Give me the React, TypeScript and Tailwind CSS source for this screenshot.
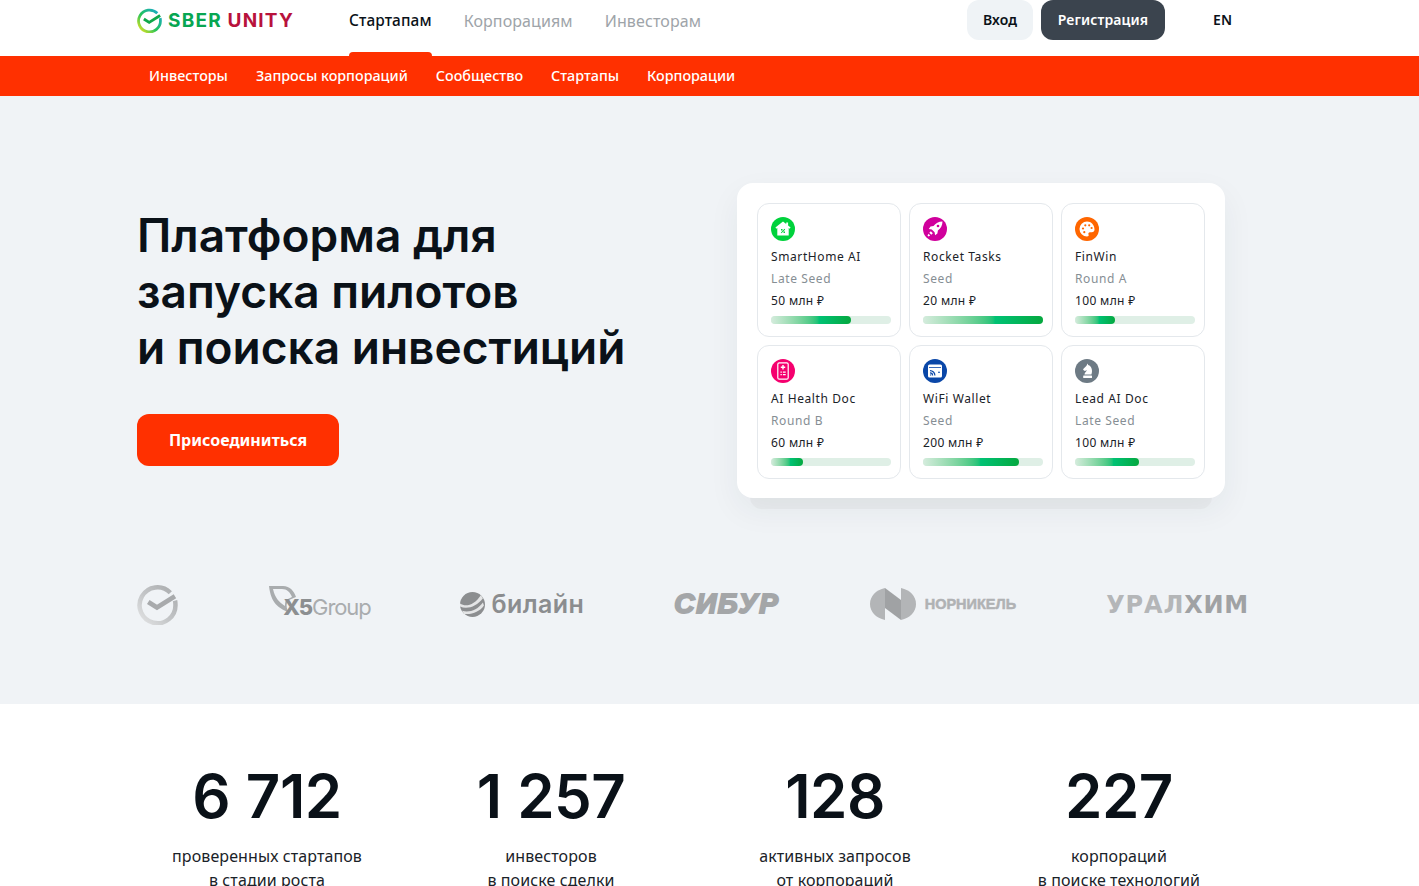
import { ReactNode } from "react";

const sans = "font-['Noto_Sans','Open_Sans',sans-serif]";

interface Startup {
  name: string;
  round: string;
  amount: string;
  progress: number;
  color: string;
  icon: ReactNode;
}

const HomeIcon = (
  <svg viewBox="0 0 24 24" className="h-6 w-6">
    <path d="M12 4.500l3.200 2.500V5.600h1.900v3l2.500 2-1 1.200-.9-.7V18.500H6.300v-7.400l-.9.7-1-1.200z" fill="#fff" />
    <path d="M10 12h1.500v1.500H10zm2.500 2.500H14V16h-1.500zM13.500 11.800l.7.6-3.700 3.900-.7-.6z" fill="#00d23c" />
  </svg>
);

const RocketIcon = (
  <svg viewBox="0 0 24 24" className="h-6 w-6">
    <path d="M19.500 4.500c-4 .1-6.800 1.700-9 4.600l-3 .5-1.700 2.300 3 .5 2.800 2.800.5 3 2.300-1.700.5-3c2.900-2.200 4.500-5 4.600-9z" fill="#fff" />
    <circle cx="15" cy="9" r="1.300" fill="#d0009c" />
    <path d="M7.800 14.200l2 2-1.500 1.500-2-2zM5.500 16.800l1.700 1.700-1.700 1-1-1z" fill="#fff" />
  </svg>
);

const PaletteIcon = (
  <svg viewBox="0 0 24 24" className="h-6 w-6">
    <path d="M12 4.500a7.500 7.500 0 0 0 0 15c1.400 0 2-1 1.500-2-.5-1.100.2-2.300 1.500-2.300h1.800c1.600 0 2.700-1.100 2.700-2.800 0-4.400-3.300-7.900-7.500-7.900z" fill="#fff" />
    <circle cx="8" cy="11.500" r="1.100" fill="#ff6600" />
    <circle cx="10.300" cy="8.300" r="1.100" fill="#ff6600" />
    <circle cx="14.200" cy="8.300" r="1.100" fill="#ff6600" />
    <circle cx="16.600" cy="11" r="1.100" fill="#ff6600" />
    <circle cx="9.300" cy="15.200" r="1.100" fill="#ff6600" />
  </svg>
);

const HealthIcon = (
  <svg viewBox="0 0 24 24" className="h-6 w-6">
    <rect x="6.800" y="3.800" width="10.400" height="16.400" rx="1.500" fill="none" stroke="#fff" strokeWidth="1.200" />
    <path d="M11.300 6h1.400v1.500h1.500v1.400h-1.500v1.500h-1.400V8.900H9.800V7.500h1.500z" fill="#fff" />
    <path d="M9.500 12.500h1.300v1.300H9.500zm2.400 0h2.800v1.300h-2.800zm-2.400 2.500h1.300v1.300H9.500zm2.400 0h2.800v1.300h-2.800z" fill="#fff" />
  </svg>
);

const WalletIcon = (
  <svg viewBox="0 0 24 24" className="h-6 w-6">
    <path d="M6.500 5.500h11A1.500 1.500 0 0 1 19 7v10a1.500 1.500 0 0 1-1.500 1.500h-11A1.500 1.500 0 0 1 5 17V7a1.500 1.500 0 0 1 1.500-1.500z" fill="#fff" />
    <path d="M6 8.200h12V9H6z" fill="#0a47a8" />
    <path d="M7 11a5.500 5.500 0 0 1 5.500 5.500h-1.200A4.300 4.300 0 0 0 7 12.200zm0 2.300a3.200 3.200 0 0 1 3.200 3.200H9A2 2 0 0 0 7 14.500zm0 2.100h1.200v1.100H7zM15 12.800h2v1h-2z" fill="#0a47a8" />
  </svg>
);

const ChessIcon = (
  <svg viewBox="0 0 24 24" className="h-6 w-6">
    <path d="M12.500 4.500l.7 1.500c2.500.7 3.800 3.200 3.800 6 0 1.300-.2 2.500-.6 3.500H9.500c0-2 1.800-2.800 2.400-4.500-1 .7-1.900.9-2.800.8L8 10.300 11.500 6.700z" fill="#fff" />
    <rect x="8.200" y="16.500" width="8.800" height="2.500" rx=".5" fill="#fff" />
  </svg>
);

const startups: Startup[] = [
  { name: "SmartHome AI", round: "Late Seed", amount: "50 млн ₽", progress: 67, color: "bg-[#00d23c]", icon: HomeIcon },
  { name: "Rocket Tasks", round: "Seed", amount: "20 млн ₽", progress: 100, color: "bg-[#d0009c]", icon: RocketIcon },
  { name: "FinWin", round: "Round A", amount: "100 млн ₽", progress: 33, color: "bg-[#ff6600]", icon: PaletteIcon },
  { name: "AI Health Doc", round: "Round B", amount: "60 млн ₽", progress: 27, color: "bg-[#f5006e]", icon: HealthIcon },
  { name: "WiFi Wallet", round: "Seed", amount: "200 млн ₽", progress: 80, color: "bg-[#0a47a8]", icon: WalletIcon },
  { name: "Lead AI Doc", round: "Late Seed", amount: "100 млн ₽", progress: 53, color: "bg-[#6d7a84]", icon: ChessIcon },
];

const stats = [
  { value: "6 712", top: "проверенных стартапов", bottom: "в стадии роста" },
  { value: "1 257", top: "инвесторов", bottom: "в поиске сделки" },
  { value: "128", top: "активных запросов", bottom: "от корпораций" },
  { value: "227", top: "корпораций", bottom: "в поиске технологий" },
];

function SberMark({ className, gray = false }: { className: string; gray?: boolean }) {
  const id = gray ? "sber-gray" : "sber-color";
  return (
    <svg viewBox="0 0 40 40" className={className}>
      <defs>
        <linearGradient id={id} x1="0" y1="1" x2="1" y2="0">
          <stop offset="0" stopColor={gray ? "#e2e3e4" : "#f5e61e"} />
          <stop offset="0.45" stopColor={gray ? "#c4c6c8" : "#21c35a"} />
          <stop offset="1" stopColor={gray ? "#a9abad" : "#1aa6d8"} />
        </linearGradient>
      </defs>
      <path d="M32.500 8.500A17.500 17.500 0 1 0 37.500 20c0-1.300-.1-2.600-.4-3.800" fill="none" stroke={`url(#${id})`} strokeWidth="4.400" />
      <path d="M11 17.500l8.500 5.500L37 12" fill="none" stroke={gray ? "#a8aaac" : "#10a84a"} strokeWidth="4.600" />
    </svg>
  );
}

function StartupCard({ startup }: { startup: Startup }) {
  return (
    <div className="flex h-[134px] flex-col rounded-xl border border-[#e4e8ec] bg-white pl-[13px] pr-[9px] pt-[13px]">
      <div className={`flex h-6 w-6 items-center justify-center rounded-full ${startup.color}`}>{startup.icon}</div>
      <div className="mt-[5px] text-[12px] leading-[22px] tracking-[0.6px] text-[#1a2228]">{startup.name}</div>
      <div className="text-[12px] leading-[22px] tracking-[0.6px] text-[#868e94]">{startup.round}</div>
      <div className="text-[12px] leading-[22px] tracking-[0.35px] text-[#1a2228]">{startup.amount}</div>
      <div className="mt-[4px] h-2 w-full rounded-full bg-[#dfefe6]">
        <div
          className="h-2 rounded-full bg-gradient-to-r from-[#d5ecdd] via-[#00c274] via-60% to-[#05a83e]"
          style={{ width: `${startup.progress}%` }}
        />
      </div>
    </div>
  );
}

export default function App() {
  return (
    <div className={`${sans} min-h-[886px] overflow-hidden bg-white text-[#0a1118]`}>
      {/* Top navigation */}
      <header className="flex h-14 items-start pl-[137px] pr-[186px]">
        <div className="flex h-10 w-[212px] items-center gap-[6px]">
          <SberMark className="h-[25px] w-[25px]" />
          <span className="font-['Inter',sans-serif] text-[19px] font-bold leading-none tracking-[1.2px] text-[#08a652]">
            SBER <span className="text-[#b8123c]">UNITY</span>
          </span>
        </div>
        <nav className="flex h-14 gap-8 text-[16px] tracking-[0.1px]">
          <a className="relative h-14 pt-[9px] text-[15.4px] font-medium text-[#0a1118]">
            Стартапам
            <span className="absolute bottom-0 left-0 h-1 w-full rounded-t-[4px] bg-[#ff3000]" />
          </a>
          <a className="pt-[9px] text-[#9ea4a9]">Корпорациям</a>
          <a className="pt-[9px] text-[#9ea4a9]">Инвесторам</a>
        </nav>
        <div className="ml-auto flex items-center text-[14px] font-semibold tracking-[0.1px]">
          <button className="h-10 w-[66px] rounded-xl bg-[#eff3f6] pb-[2px] text-[#0a1118]">Вход</button>
          <button className="ml-2 h-10 w-[124px] rounded-xl bg-[#3b444e] pb-[2px] text-white">Регистрация</button>
          <span className="ml-12 w-[20px] pb-[2px] text-[#0a1118]">EN</span>
        </div>
      </header>

      {/* Red sub navigation */}
      <div className="flex h-10 items-center gap-7 bg-[#ff3000] pl-[149px] text-[14.35px] font-medium text-white">
        <a>Инвесторы</a>
        <a>Запросы корпораций</a>
        <a>Сообщество</a>
        <a>Стартапы</a>
        <a>Корпорации</a>
      </div>

      {/* Hero */}
      <section className="h-[608px] bg-[#f0f3f6] pl-[137px] pr-[170px]">
        <div className="flex items-start justify-between pt-[87px]">
          <div className="pt-[24px]">
            <h1 className="font-['Inter',sans-serif] text-[46px] font-semibold leading-[56px] tracking-[0px] text-[#0a1118]">
              Платформа для
              <br />
              запуска пилотов
              <br />и поиска инвестиций
            </h1>
            <button className="mt-[39px] h-[52px] w-[202px] rounded-xl bg-[#ff3000] text-[16px] font-bold text-white">
              Присоединиться
            </button>
          </div>
          <div className="relative mr-[24px]">
            <div className="absolute -bottom-[11px] left-[13px] right-[13px] h-6 rounded-xl bg-[#e9ecee]" />
            <div className="relative grid w-[488px] grid-cols-3 gap-2 rounded-2xl bg-white px-5 pb-[19px] pt-5 shadow-[0_12px_32px_rgba(30,50,70,0.06)]">
              {startups.map(startup => (
                <StartupCard key={startup.name} startup={startup} />
              ))}
            </div>
          </div>
        </div>

        {/* Partner logos */}
        <div className="mt-[82px] flex h-12 items-center justify-between">
          <SberMark gray className="h-[41px] w-[41px]" />
          <div className="relative h-10 w-[102px]">
            <svg viewBox="0 0 32 34" className="absolute left-0 top-0 h-[34px] w-8">
              <path d="M1 2h14c7 0 11 5 13 11l-7 3-2 3c-1 3 0 6 1 9C11 24 3 20 1 2z" fill="#a9acae" />
              <path d="M5 5h9c5 0 8 3 10 8l-6 3c-1 2-1 4-1 6C11 18 7 14 5 5z" fill="#f0f3f6" />
            </svg>
            <span className="absolute left-[15px] top-[9px] font-['Inter',sans-serif] text-[22px] leading-[28px] tracking-[-1.1px] text-[#a9acae]">
              <span className="font-extrabold text-[#8c8f91]">X5</span>Group
            </span>
          </div>
          <div className="flex items-center gap-[6px]">
            <svg viewBox="0 0 24 24" className="h-[25px] w-[25px]">
              <circle cx="12" cy="12" r="12" fill="#8c8e90" />
              <path d="M0 11c6 4 14 1 20-8l2 3C16 14 7 17 0 14zm2 7c7 2 15-1 20-8l1 3c-4 6-12 9-19 8z" fill="#e4e5e6" />
            </svg>
            <span className="font-['Inter',sans-serif] text-[25px] font-semibold leading-none tracking-[0.4px] text-[#8b8d8f]">билайн</span>
          </div>
          <span className="font-['Liberation_Sans',sans-serif] text-[28px] font-bold italic leading-none tracking-[1.6px] text-[#a4a6a8] [-webkit-text-stroke:2px_#a4a6a8]">
            СИБУР
          </span>
          <div className="flex items-center gap-[9px]">
            <svg viewBox="0 0 46 32" className="h-8 w-[46px]">
              <path d="M15 0v32C6 30 0 24 0 16S6 2 15 0z" fill="#b3b5b7" />
              <path d="M31 0c9 2 15 8 15 16s-6 14-15 16z" fill="#b3b5b7" />
              <path d="M15 0l16 12v20L15 20z" fill="#a0a2a4" />
            </svg>
            <span className="font-['Liberation_Sans',sans-serif] text-[14.5px] font-bold leading-none text-[#b0b2b4] [-webkit-text-stroke:0.5px_#b0b2b4]">НОРНИКЕЛЬ</span>
          </div>
          <span className="pt-[1px] font-['DejaVu_Sans',sans-serif] text-[24px] font-bold leading-none tracking-[0.8px] text-[#b4b6b8]">
            УРАЛ<span className="text-[#a0a2a4]">ХИМ</span>
          </span>
        </div>
      </section>

      {/* Stats */}
      <section className="grid grid-cols-4 pl-[125px] pr-[158px] pt-[56px] text-center">
        {stats.map(stat => (
          <div key={stat.value}>
            <div className="font-['Inter',sans-serif] text-[60px] font-semibold leading-[72px] tracking-[-0.5px] [word-spacing:1px] text-[#0a1118]">{stat.value}</div>
            <div className="mt-[12px] text-[16px] leading-6 tracking-[0.1px] text-[#1a2228]">
              {stat.top}
              <br />
              {stat.bottom}
            </div>
          </div>
        ))}
      </section>
    </div>
  );
}
